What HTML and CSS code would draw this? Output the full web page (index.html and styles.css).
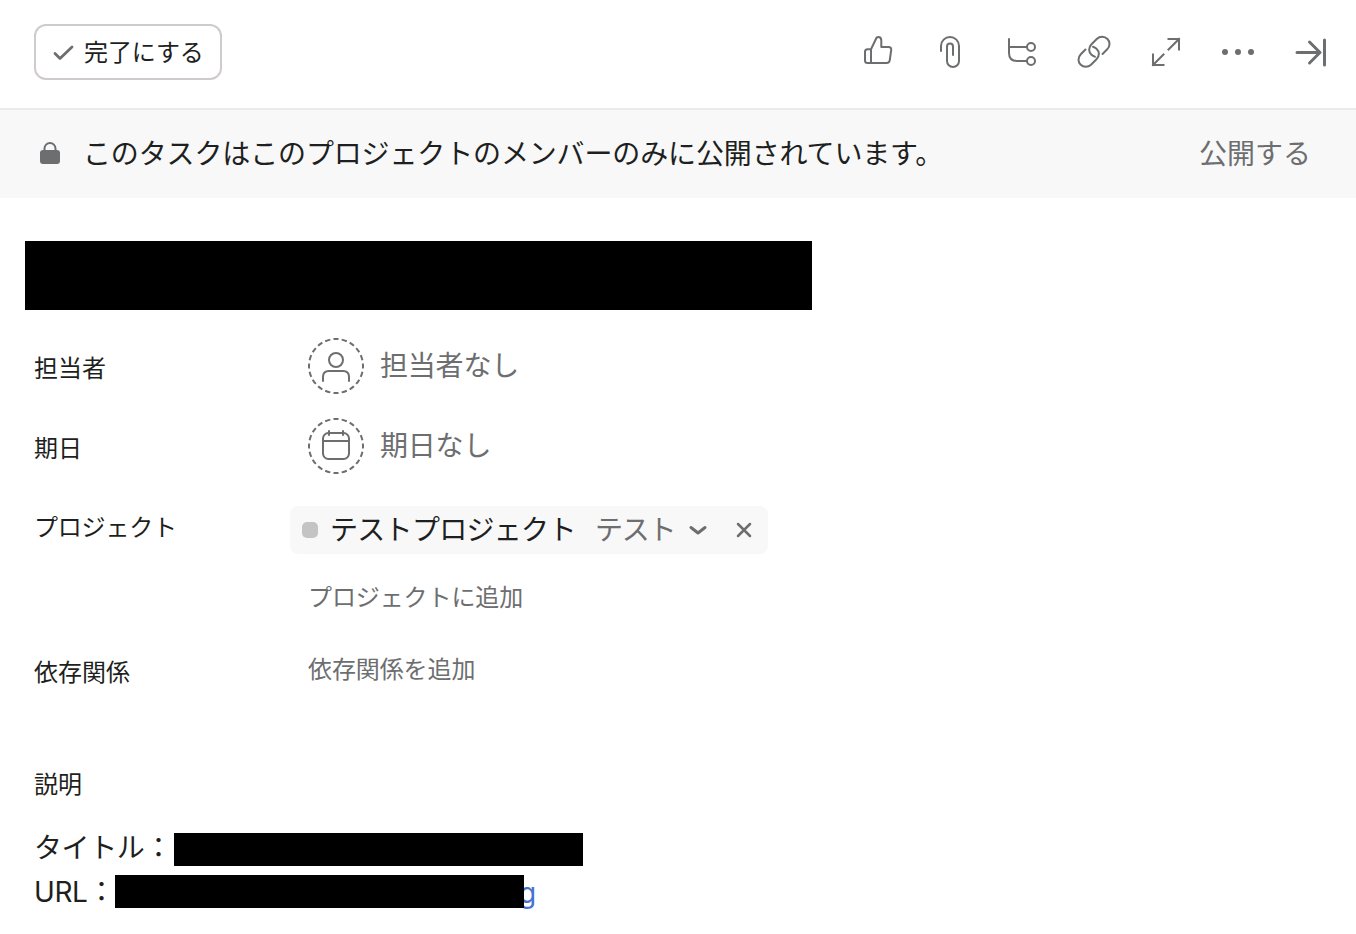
FILE: index.html
```html
<!DOCTYPE html>
<html lang="ja">
<head>
<meta charset="utf-8">
<title>タスクの詳細</title>
<link rel="stylesheet" href="styles.css">
</head>
<body>
<header class="toolbar">
  <button class="complete">
    <svg class="complete-icon" viewBox="0 0 24 24"><path d="M3 13.500l5 5L20 7" stroke-width="2.800"/></svg>
    <span>完了にする</span>
  </button>
  <nav class="actions">
    <svg class="icon" viewBox="0 0 36 36"><path d="M11 15.300L15.700 5.500Q16.300 3 18.500 3Q21.300 3 21.300 6.500V13H28.500Q31.500 13 31.200 16L29.800 26Q29.500 29 26.500 29H7.500Q5 29 5 26.500V17.800Q5 15.300 7.500 15.300H11V29"/></svg>
    <svg class="icon" viewBox="0 0 36 36"><path d="M9 17V12a9 9 0 0 1 18 0V27a6 6 0 0 1-12 0V12.500a3 3 0 0 1 6 0V21"/></svg>
    <svg class="icon" viewBox="0 0 36 36"><path d="M5 5V19Q5 27 13 27H23M5 13H23"/><circle cx="27" cy="13" r="4"/><circle cx="27" cy="27" r="4"/></svg>
    <svg class="icon" viewBox="0 0 36 36"><path d="M9.500 15.500L5 20C1.500 23.500 2 28 4.500 30.500C7.500 33.500 12 33.500 15 30.800L20.500 25.300C23.800 22 23.500 17.500 20.500 14.700Q19 13.300 17 12.700M26.500 20L31 15.500C34.500 12 34 7.500 31.500 5C28.500 2 24 2 21 4.700L15.500 10.200C12.200 13.500 12.500 18 15.500 20.800Q17 22.200 19 22.800"/></svg>
    <svg class="icon square" viewBox="0 0 36 36"><path d="M20.500 15.500L31 5M20.500 5H31V15.500M15.500 20.500L5 31M5 20.500V31H15.500"/></svg>
    <svg class="icon solid" viewBox="0 0 36 36"><circle cx="5" cy="18" r="3"/><circle cx="18" cy="18" r="3"/><circle cx="31" cy="18" r="3"/></svg>
    <svg class="icon heavy" viewBox="0 0 36 36"><path d="M5 18.500H28M17.500 8L28 18.500L17.500 29M32.500 6V31"/></svg>
  </nav>
</header>
<section class="banner">
  <svg class="lock" viewBox="0 0 24 24"><rect x="2" y="10" width="20" height="14" rx="3"/><path d="M6.500 11V8.500a5.500 5.500 0 0 1 11 0V11"/></svg>
  <p class="banner-text">このタスクはこのプロジェクトのメンバーのみに公開されています。</p>
  <a class="publish">公開する</a>
</section>
<main class="task">
  <h1 class="title-mask"></h1>
  <div class="field">
    <div class="label">担当者</div>
    <div class="value">
      <svg class="ring" viewBox="0 0 56 56"><circle class="dashes" cx="28" cy="28" r="27" pathLength="100"/><circle cx="28" cy="22" r="7"/><path d="M15 43V39Q15 33 21 33H35Q41 33 41 39V43"/></svg>
      <span>担当者なし</span>
    </div>
  </div>
  <div class="field">
    <div class="label">期日</div>
    <div class="value">
      <svg class="ring" viewBox="0 0 56 56"><circle class="dashes" cx="28" cy="28" r="27" pathLength="100"/><rect x="15" y="15" width="26" height="26" rx="5.500"/><path d="M15 23H41M21 13V17M35 13V17"/></svg>
      <span>期日なし</span>
    </div>
  </div>
  <div class="field project">
    <div class="label">プロジェクト</div>
    <div class="chip">
      <i class="swatch"></i>
      <span class="project-name">テストプロジェクト</span>
      <span class="section-name">テスト</span>
      <svg class="chevron" viewBox="0 0 20 20"><path d="M3 7.500l7 5.500L17 7.500" stroke-width="3"/></svg>
      <svg class="remove" viewBox="0 0 20 20"><path d="M4 4L16 16M16 4L4 16" stroke-width="2.500"/></svg>
    </div>
  </div>
  <div class="field add-project"><a class="add">プロジェクトに追加</a></div>
  <div class="field dependency">
    <div class="label">依存関係</div>
    <a class="add">依存関係を追加</a>
  </div>
  <h2 class="label description-label">説明</h2>
  <div class="description">
    <div class="line"><span class="key-title">タイトル：</span><span class="mask"></span></div>
    <div class="line url"><span class="key-url"><span class="latin">URL</span>：</span><span class="mask"></span><a class="link">g</a></div>
  </div>
</main>
</body>
</html>
```

FILE: styles.css
```css
* { box-sizing: border-box; }
body {
  margin: 0;
  height: 934px;
  overflow: hidden;
  background: #fff;
  color: #1e1f21;
  font: 28px/40px "Noto Sans CJK JP", sans-serif;
}
h1, h2, p { margin: 0; font-weight: 400; }
svg {
  flex: none;
  fill: none;
  stroke: #6d6e6f;
  stroke-width: 2;
  stroke-linecap: round;
  stroke-linejoin: round;
}
.toolbar {
  display: flex;
  align-items: center;
  justify-content: space-between;
  height: 110px;
  padding: 0 28px 6px 34px;
  border-bottom: 2px solid #edeae9;
}
.complete {
  display: flex;
  align-items: center;
  gap: 8px;
  width: 188px;
  height: 56px;
  margin-top: 2px;
  padding: 0 0 0 16px;
  border: 2px solid #cfcbcb;
  border-radius: 12px;
  background: #fff;
  color: inherit;
  font: 24px/36px "Noto Sans CJK JP", sans-serif;
  white-space: nowrap;
}
.complete span { padding-bottom: 2px; letter-spacing: -0.1px; }
.complete-icon { width: 24px; height: 24px; }
.actions { display: flex; gap: 36px; margin-top: 2px; }
.icon { width: 36px; height: 36px; }
.square { stroke-linecap: square; stroke-linejoin: miter; }
.solid { fill: #6d6e6f; stroke: none; }
.heavy { stroke-width: 3; }
.banner {
  display: flex;
  align-items: center;
  height: 88px;
  padding: 0 45px 4px 38px;
  background: #f8f8f8;
}
.lock { width: 24px; height: 24px; }
.lock rect { fill: #6d6e6f; stroke: none; }
.banner-text { margin-left: 21px; white-space: nowrap; letter-spacing: -0.14px; }
.publish { margin-left: auto; color: #6d6e6f; }
.task { padding: 43px 34px 0; }
.title-mask { width: 787px; height: 69px; margin: 0 0 16px -9px; background: #000; }
.field {
  display: grid;
  grid-template-columns: 274px auto;
  justify-content: start;
  align-items: center;
  height: 80px;
}
.label { padding-top: 2px; font-size: 24px; line-height: 36px; }
.value { display: flex; align-items: center; gap: 16px; color: #6d6e6f; }
.value span { padding-bottom: 4px; letter-spacing: -0.2px; }
.ring { width: 56px; height: 56px; }
.dashes { stroke-dasharray: 3.1 1.9; stroke-dashoffset: 1.55; stroke-linecap: butt; }
.project { height: 88px; }
.project .label { padding: 0 0 8px; letter-spacing: -0.2px; }
.chip {
  display: flex;
  align-items: center;
  width: 478px;
  height: 48px;
  margin-left: -18px;
  padding: 0 14px 0 12px;
  border-radius: 8px;
  background: #f8f8f8;
  white-space: nowrap;
}
.chip span { padding-bottom: 4px; letter-spacing: -0.7px; }
.swatch { width: 16px; height: 16px; border-radius: 5px; background: #c4c4c4; }
.project-name { width: 254px; margin-left: 12px; }
.section-name { width: 82px; margin-left: 11px; color: #6d6e6f; }
.chip .section-name { letter-spacing: -1.2px; }
.chevron { width: 20px; height: 20px; margin-left: 11px; }
.remove { width: 20px; height: 20px; margin-left: auto; }
.add { padding-bottom: 4px; color: #6d6e6f; font-size: 24px; line-height: 36px; letter-spacing: -0.1px; }
.add-project { height: 48px; padding-left: 274px; grid-template-columns: auto; }
.dependency { height: 96px; }
.description-label { margin-top: 45px; }
.description { margin-top: 26px; }
.line { display: flex; align-items: center; height: 44px; white-space: nowrap; }
.key-title { width: 140px; padding-bottom: 6px; letter-spacing: -0.4px; }
.key-url { width: 81px; padding-bottom: 4px; }
.latin { font-family: Inter, sans-serif; letter-spacing: -0.4px; }
.mask { position: relative; z-index: 1; width: 409px; height: 33px; background: #000; }
.url .mask { margin-bottom: 3px; }
.link { margin-left: -5px; color: #4573d2; font-family: Inter, sans-serif; }
```
